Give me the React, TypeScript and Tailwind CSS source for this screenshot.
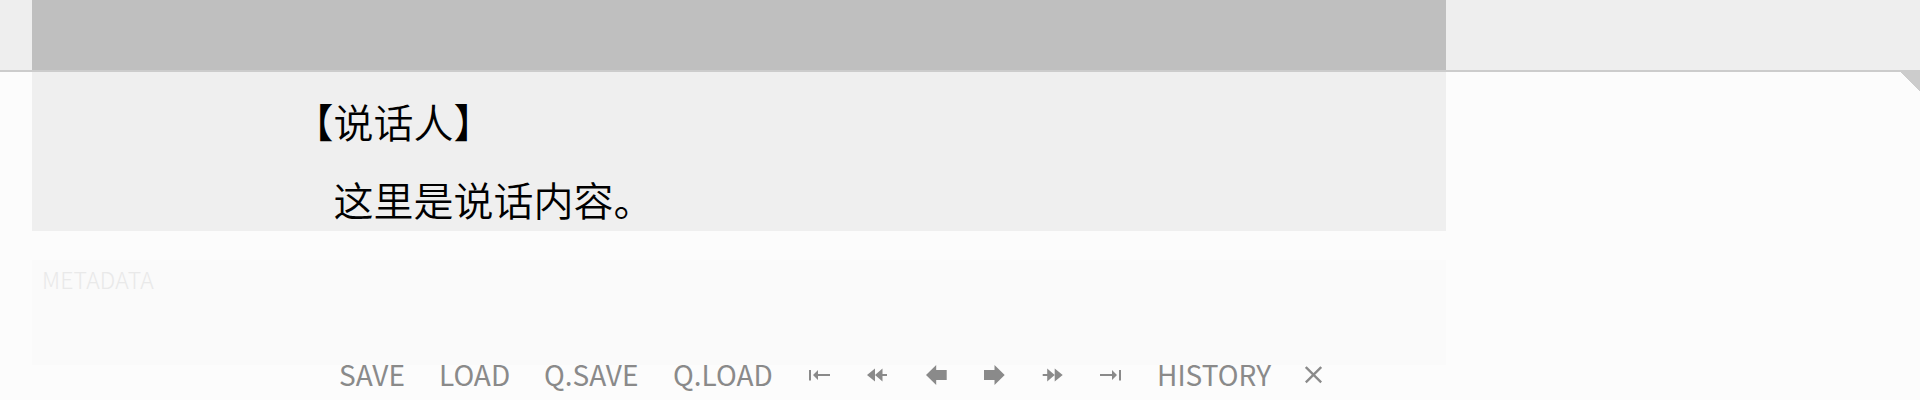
import type { ReactNode } from 'react';

function Icon({ label, children }: { label: string; children: ReactNode }) {
  return (
    <button aria-label={label} className="h-6 w-[58.3px] shrink-0">
      <svg width="22" height="24" viewBox="0 0 22 24" fill="currentColor" className="block">
        {children}
      </svg>
    </button>
  );
}

function First() {
  return (
    <>
      <path d="M0 7h2v10.4H0z" />
      <path d="M4 12 9 7v4h12v2H9v4z" />
    </>
  );
}

function Rewind() {
  return <path d="M0 12 8 5.5V12l7.5-6.5V11H20v2h-4.500v5.500L8 12v6.500z" />;
}

function Back() {
  return <path d="M0 12 10.200 2v5H20.700v10H10.200v5z" />;
}

export default function App() {
  return (
    <main className="flex h-[400px] w-[1920px] flex-col overflow-hidden bg-[#fcfcfc] font-['Noto_Sans_CJK_SC',sans-serif]">
      <header className="h-[72px] shrink-0 border-b-2 border-[#cccccc] bg-[#eeeeee] pl-8">
        <div className="h-[70px] w-[1414px] bg-[#bfbfbf]" />
      </header>
      <div className="flex h-[328px] justify-between pl-8">
        <div className="flex w-[1414px] flex-col">
          <section className="flex h-[159px] shrink-0 flex-col bg-[#efefef] pl-[261.5px] pt-[10px] text-[40px] font-[350] text-black">
            <p className="h-[78px] leading-[78px]">【说话人】</p>
            <p className="h-[70px] pl-10 leading-[78px]">这里是说话内容。</p>
          </section>
          <section className="mt-[29px] h-[105px] shrink-0 bg-[#fafafa] pl-[10px] pt-[3px] text-[23px] font-light leading-[32px] tracking-[0.15px] text-[#e9e9e9]">
            METADATA
          </section>
          <nav className="flex h-[35px] pl-[307px] text-[28px] leading-[18px] text-[#8a8a8a]">
            <button className="block h-[18px] w-[100px] shrink-0 text-left">SAVE</button>
            <button className="block h-[18px] w-[105px] shrink-0 text-left">LOAD</button>
            <button className="block h-[18px] w-[129px] shrink-0 text-left">Q.SAVE</button>
            <button className="block h-[18px] w-[136px] shrink-0 text-left">Q.LOAD</button>
            <div className="-mt-[2px] flex w-[348px] shrink-0">
              <Icon label="First"><First /></Icon>
              <Icon label="Rewind"><Rewind /></Icon>
              <Icon label="Back"><Back /></Icon>
              <Icon label="Forward"><g transform="matrix(-1 0 0 1 20.700 0)"><Back /></g></Icon>
              <Icon label="Fast forward"><g transform="matrix(-1 0 0 1 20.700 0)"><Rewind /></g></Icon>
              <Icon label="Last"><g transform="matrix(-1 0 0 1 21 0)"><First /></g></Icon>
            </div>
            <button className="block h-[18px] w-[148px] shrink-0 text-left">HISTORY</button>
            <button aria-label="Close" className="-mt-[2px] h-6 w-[17px] shrink-0">
              <svg width="17" height="24" viewBox="0 0 17 24" fill="none" stroke="currentColor" strokeWidth="2.4" className="block">
                <path d="m.8 4 15.400 15.400m0-15.400L.8 19.400" />
              </svg>
            </button>
          </nav>
        </div>
        <svg width="20" height="20" viewBox="0 0 20 20" shapeRendering="crispEdges" className="block shrink-0">
          <path d="M0-.5h20v20z" fill="#cccccc" />
        </svg>
      </div>
    </main>
  );
}
